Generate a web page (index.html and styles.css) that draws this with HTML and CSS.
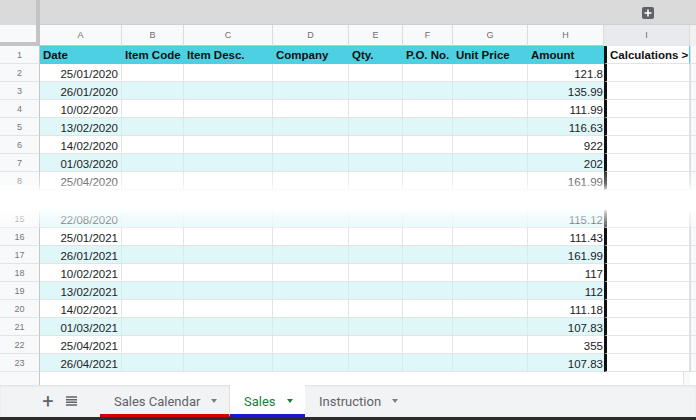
FILE: index.html
```html
<!DOCTYPE html>
<html>
<head>
<meta charset="utf-8">
<link rel="stylesheet" href="styles.css">
</head>
<body>
<div class="app">
  <div class="head">
    <div class="corner"></div>
    <div class="head-main">
      <div class="topbar">
        <svg class="addcol" width="12" height="12" viewBox="0 0 12 12"><rect x="0" y="0" width="12" height="12" rx="2" fill="#5f6368"/><path d="M6 2.5v7M2.5 6h7" stroke="#fff" stroke-width="1.6"/></svg>
      </div>
      <div class="letters">
        <div class="L">A</div><div class="L">B</div><div class="L">C</div><div class="L">D</div><div class="L">E</div><div class="L">F</div><div class="L">G</div><div class="L">H</div><div class="L sel">I</div><div class="L scr"></div>
      </div>
    </div>
  </div>

  <div class="grid">
    <div class="r hdr"><div class="n">1</div><div class="c">Date</div><div class="c">Item Code</div><div class="c">Item Desc.</div><div class="c">Company</div><div class="c">Qty.</div><div class="c">P.O. No.</div><div class="c">Unit Price</div><div class="c h">Amount</div><div class="c i">Calculations &gt;</div><div class="s"></div></div>
    <div class="r"><div class="n">2</div><div class="c num">25/01/2020</div><div class="c"></div><div class="c"></div><div class="c"></div><div class="c"></div><div class="c"></div><div class="c"></div><div class="c h num">121.8</div><div class="c i"></div><div class="s"></div></div>
    <div class="r band"><div class="n">3</div><div class="c num">26/01/2020</div><div class="c"></div><div class="c"></div><div class="c"></div><div class="c"></div><div class="c"></div><div class="c"></div><div class="c h num">135.99</div><div class="c i"></div><div class="s"></div></div>
    <div class="r"><div class="n">4</div><div class="c num">10/02/2020</div><div class="c"></div><div class="c"></div><div class="c"></div><div class="c"></div><div class="c"></div><div class="c"></div><div class="c h num">111.99</div><div class="c i"></div><div class="s"></div></div>
    <div class="r band"><div class="n">5</div><div class="c num">13/02/2020</div><div class="c"></div><div class="c"></div><div class="c"></div><div class="c"></div><div class="c"></div><div class="c"></div><div class="c h num">116.63</div><div class="c i"></div><div class="s"></div></div>
    <div class="r"><div class="n">6</div><div class="c num">14/02/2020</div><div class="c"></div><div class="c"></div><div class="c"></div><div class="c"></div><div class="c"></div><div class="c"></div><div class="c h num">922</div><div class="c i"></div><div class="s"></div></div>
    <div class="r band"><div class="n">7</div><div class="c num">01/03/2020</div><div class="c"></div><div class="c"></div><div class="c"></div><div class="c"></div><div class="c"></div><div class="c"></div><div class="c h num">202</div><div class="c i"></div><div class="s"></div></div>
    <div class="r"><div class="n">8</div><div class="c num">25/04/2020</div><div class="c"></div><div class="c"></div><div class="c"></div><div class="c"></div><div class="c"></div><div class="c"></div><div class="c h num">161.99</div><div class="c i"></div><div class="s"></div></div>
    <div class="gap"></div>
    <div class="r band"><div class="n">15</div><div class="c num">22/08/2020</div><div class="c"></div><div class="c"></div><div class="c"></div><div class="c"></div><div class="c"></div><div class="c"></div><div class="c h num">115.12</div><div class="c i"></div><div class="s"></div></div>
    <div class="r"><div class="n">16</div><div class="c num">25/01/2021</div><div class="c"></div><div class="c"></div><div class="c"></div><div class="c"></div><div class="c"></div><div class="c"></div><div class="c h num">111.43</div><div class="c i"></div><div class="s"></div></div>
    <div class="r band"><div class="n">17</div><div class="c num">26/01/2021</div><div class="c"></div><div class="c"></div><div class="c"></div><div class="c"></div><div class="c"></div><div class="c"></div><div class="c h num">161.99</div><div class="c i"></div><div class="s"></div></div>
    <div class="r"><div class="n">18</div><div class="c num">10/02/2021</div><div class="c"></div><div class="c"></div><div class="c"></div><div class="c"></div><div class="c"></div><div class="c"></div><div class="c h num">117</div><div class="c i"></div><div class="s"></div></div>
    <div class="r band"><div class="n">19</div><div class="c num">13/02/2021</div><div class="c"></div><div class="c"></div><div class="c"></div><div class="c"></div><div class="c"></div><div class="c"></div><div class="c h num">112</div><div class="c i"></div><div class="s"></div></div>
    <div class="r"><div class="n">20</div><div class="c num">14/02/2021</div><div class="c"></div><div class="c"></div><div class="c"></div><div class="c"></div><div class="c"></div><div class="c"></div><div class="c h num">111.18</div><div class="c i"></div><div class="s"></div></div>
    <div class="r band"><div class="n">21</div><div class="c num">01/03/2021</div><div class="c"></div><div class="c"></div><div class="c"></div><div class="c"></div><div class="c"></div><div class="c"></div><div class="c h num">107.83</div><div class="c i"></div><div class="s"></div></div>
    <div class="r"><div class="n">22</div><div class="c num">25/04/2021</div><div class="c"></div><div class="c"></div><div class="c"></div><div class="c"></div><div class="c"></div><div class="c"></div><div class="c h num">355</div><div class="c i"></div><div class="s"></div></div>
    <div class="r band"><div class="n">23</div><div class="c num">26/04/2021</div><div class="c"></div><div class="c"></div><div class="c"></div><div class="c"></div><div class="c"></div><div class="c"></div><div class="c h num">107.83</div><div class="c i"></div><div class="s"></div></div>
    <div class="filler"><div class="fn"></div><div class="fc"></div><div class="fs"></div></div>
    <div class="fade"></div>
  </div>

  <div class="tabbar">
    <div class="tb-icon plus">+</div>
    <div class="tb-icon menu">
      <svg width="11" height="10" viewBox="0 0 11 10"><path d="M0 1h11M0 3.7h11M0 6.3h11M0 9h11" stroke="#5f6368" stroke-width="1.4"/></svg>
    </div>
    <div class="tab t1">Sales Calendar<span class="caret"></span></div>
    <div class="tab t2 active">Sales<span class="caret"></span></div>
    <div class="tab t3">Instruction<span class="caret"></span></div>
  </div>
  <div class="bottom"></div>
</div>
</body>
</html>
```

FILE: styles.css
```css
* { box-sizing: border-box; }
html, body { margin: 0; padding: 0; }
body {
  width: 696px;
  height: 420px;
  overflow: hidden;
  background: #fff;
  font-family: "Liberation Sans", Arial, sans-serif;
}
.app {
  width: 696px;
  height: 420px;
  display: flex;
  flex-direction: column;
}

/* header area */
.head {
  display: flex;
  height: 46px;
}
.corner {
  width: 40px;
  height: 46px;
  flex: none;
  background: linear-gradient(#dadada 0 25px, #f8f9fa 25px);
  border-right: 4px solid #c4c4c4;
  border-bottom: 4px solid #c4c4c4;
}
.head-main {
  flex: 1;
  display: flex;
  flex-direction: column;
}
.topbar {
  height: 25px;
  background: #dadada;
  border-bottom: 1px solid #cfcfcf;
  position: relative;
}
.addcol {
  position: absolute;
  left: 602px;
  top: 7px;
}
.letters {
  height: 21px;
  display: grid;
  grid-template-columns: 82px 62px 89px 76px 54px 50px 75px 76px 86px 6px;
  background: #f8f9fa;
  border-bottom: 1px solid #c4c7c5;
}
.L {
  font-size: 9px;
  color: #6f6f6f;
  text-align: center;
  line-height: 21px;
  border-right: 1px solid #dadce0;
}
.L.sel { background: #e8eaed; border-right: 1px solid #dadce0; }
.L.scr { background: #f1f1f1; border-right: none; }

/* grid */
.grid {
  position: relative;
  display: flex;
  flex-direction: column;
}
.r {
  display: grid;
  grid-template-columns: 40px 82px 62px 89px 76px 54px 50px 75px 76px 86px 6px;
  height: 18px;
}
.r > div {
  border-bottom: 1px solid #e2e3e3;
  border-right: 1px solid #e2e3e3;
  overflow: hidden;
  white-space: nowrap;
}
.n {
  background: #f8f9fa;
  color: #777;
  font-size: 9px;
  text-align: center;
  line-height: 19px;
  border-right: 1px solid #c4c7c5 !important;
}
.c {
  font-size: 11.5px;
  color: #222;
  line-height: 20px;
  padding: 0 3px;
}
.c.num { text-align: right; padding-right: 3px; }
.c.h { border-right: none !important; padding-right: 1px; }
.c.i {
  border-left: 3px solid #111;
  background: #fff;
}
.s {
  background: #f8f9fa;
  border-right: none !important;
  border-left: 1px solid #dadce0;
}
.r.hdr { height: 18px; }
.r.hdr .n { line-height: 18px; }
.r.hdr .c {
  background: #4dd0e1;
  font-weight: bold;
  color: #111;
  line-height: 19px;
  border-right-color: #4dd0e1;
  border-bottom-color: #4dd0e1;
}
.r.hdr .c.i {
  background: #fff;
  border-bottom-color: #e2e3e3;
  padding-left: 3px;
}
.r.band .c { background: #e0f7fa; border-right-color: #d5ebee; }
.r.band .c.i { background: #fff; border-right-color: #e2e3e3; }

.gap { height: 20px; background: #fff; }

.filler {
  height: 13px;
  display: grid;
  grid-template-columns: 40px 644px 6px;
}
.fn { background: #f8f9fa; border-right: 1px solid #c4c7c5; }
.fc { background: #fff; border-right: 1px solid #e2e3e3; }
.fs { background: #f8f9fa; }

.fade {
  position: absolute;
  left: 0;
  right: 0;
  top: 126px;
  height: 56px;
  background: linear-gradient(to bottom,
    rgba(255,255,255,0.15) 0px,
    rgba(255,255,255,0.4) 12px,
    #fff 20px,
    #fff 36px,
    rgba(255,255,255,0.7) 42px,
    rgba(255,255,255,0.3) 56px);
  pointer-events: none;
}

/* tab bar */
.tabbar {
  height: 32px;
  background: #f1f3f4;
  display: flex;
  align-items: stretch;
  box-shadow: inset 0 1px 2px rgba(0,0,0,0.08);
  padding-left: 40px;
}
.tb-icon {
  width: 17px;
  display: flex;
  align-items: center;
  justify-content: center;
  color: #5f6368;
}
.plus {
  font-family: "Roboto", sans-serif;
  font-size: 20px;
  font-weight: 400;
  width: 16px;
}
.menu { width: 27px; margin-left: 2px; }
.tab {
  display: flex;
  align-items: center;
  font-family: "Roboto", "Liberation Sans", sans-serif;
  font-size: 13px;
  color: #5f6368;
  padding-left: 14px;
  border-bottom: 3px solid transparent;
  padding-top: 3px;
}
.caret {
  display: inline-block;
  width: 0;
  height: 0;
  border-left: 3.5px solid transparent;
  border-right: 3.5px solid transparent;
  border-top: 4px solid #7a7e82;
  margin-left: 11px;
}
.t1 {
  margin-left: 15px;
  width: 130px;
  border-bottom-color: #d50000;
  border-right: 1px solid #e0e0e0;
}
.t2 {
  width: 75px;
  background: #fff;
  color: #188038;
  border-bottom-color: #1a1acc;
}
.t2 .caret { border-top-color: #188038; }
.t3 { width: 105px; }
.bottom {
  height: 3px;
  background: #2b2b2b;
}
```
